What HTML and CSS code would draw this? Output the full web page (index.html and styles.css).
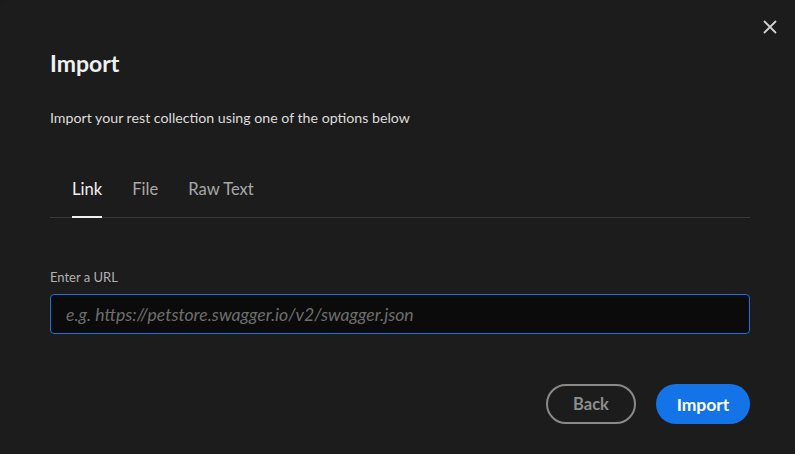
FILE: index.html
```html
<!DOCTYPE html>
<html lang="en">
<head>
    <meta charset="UTF-8">
    <meta name="viewport" content="width=device-width, initial-scale=1.0">
    <title>Import</title>
    <link rel="stylesheet" href="styles.css">
</head>
<body>
    <div class="dialog">
        <button class="close-button" aria-label="Close">
            <svg width="14" height="14" viewBox="0 0 14 14">
                <path d="M1.5 1.5 L12.5 12.5 M12.5 1.5 L1.5 12.5" stroke="#d0d0d0" stroke-width="1.8" stroke-linecap="round"/>
            </svg>
        </button>
        <h2 class="dialog-title">Import</h2>
        <p class="dialog-text">Import your rest collection using one of the options below</p>
        <div class="tabs">
            <div class="tab active">Link</div>
            <div class="tab">File</div>
            <div class="tab">Raw Text</div>
        </div>
        <div class="field">
            <label class="field-label" for="url">Enter a URL</label>
            <input class="field-input" id="url" type="text" placeholder="e.g. https://petstore.swagger.io/v2/swagger.json">
        </div>
        <div class="actions">
            <button class="btn btn-secondary">Back</button>
            <button class="btn btn-primary">Import</button>
        </div>
    </div>
</body>
</html>
```

FILE: styles.css
```css
html, body {
    margin: 0;
    height: 100%;
    background: #1b1b1b;
}

body {
    font-family: Lato, "Noto Sans", sans-serif;
    color: #e8e8e8;
}

.dialog {
    position: relative;
    box-sizing: border-box;
    width: 795px;
    height: 454px;
    padding: 49px 45px 0 50px;
    background: #1c1c1c;
    border-radius: 8px 0 0 0;
}

.close-button {
    position: absolute;
    top: 20px;
    right: 17px;
    width: 16px;
    height: 16px;
    padding: 0;
    border: none;
    background: none;
    cursor: pointer;
}

.dialog-title {
    margin: 0;
    font-size: 23px;
    font-weight: 700;
    line-height: 28px;
    color: #f0f0f0;
}

.dialog-text {
    margin: 31px 0 0 0;
    font-size: 14.2px;
    line-height: 20px;
    color: #dcdcdc;
}

.tabs {
    display: flex;
    gap: 30px;
    margin-top: 50px;
    padding-left: 22px;
    border-bottom: 1px solid #383838;
}

.tab {
    padding-bottom: 16px;
    font-size: 16.6px;
    line-height: 22px;
    color: #a8a8a8;
    border-bottom: 2px solid transparent;
    margin-bottom: -1px;
}

.tab.active {
    color: #f0f0f0;
    border-bottom-color: #f0f0f0;
}

.field {
    margin-top: 51px;
    display: flex;
    flex-direction: column;
}

.field-label {
    font-size: 13px;
    line-height: 16px;
    color: #b0b0b0;
    margin-bottom: 9px;
}

.field-input {
    box-sizing: border-box;
    width: 100%;
    height: 40px;
    padding: 0 15px;
    font-family: inherit;
    font-size: 17.6px;
    color: #e8e8e8;
    background: #0b0b0b;
    border: 1px solid #1473e6;
    border-radius: 4px;
    outline: none;
}

.field-input::placeholder {
    color: #6e6e6e;
    font-style: italic;
}

.actions {
    display: flex;
    justify-content: flex-end;
    gap: 20px;
    margin-top: 50px;
}

.btn {
    box-sizing: border-box;
    height: 40px;
    padding: 0;
    font-family: inherit;
    font-size: 16.5px;
    font-weight: 700;
    border-radius: 20px;
    cursor: pointer;
}

.btn-secondary {
    width: 90px;
    background: transparent;
    color: #8e8e8e;
    border: 2px solid #8a8a8a;
}

.btn-primary {
    width: 94px;
    background: #1473e6;
    color: #ffffff;
    border: none;
    font-size: 17.5px;
}
```
